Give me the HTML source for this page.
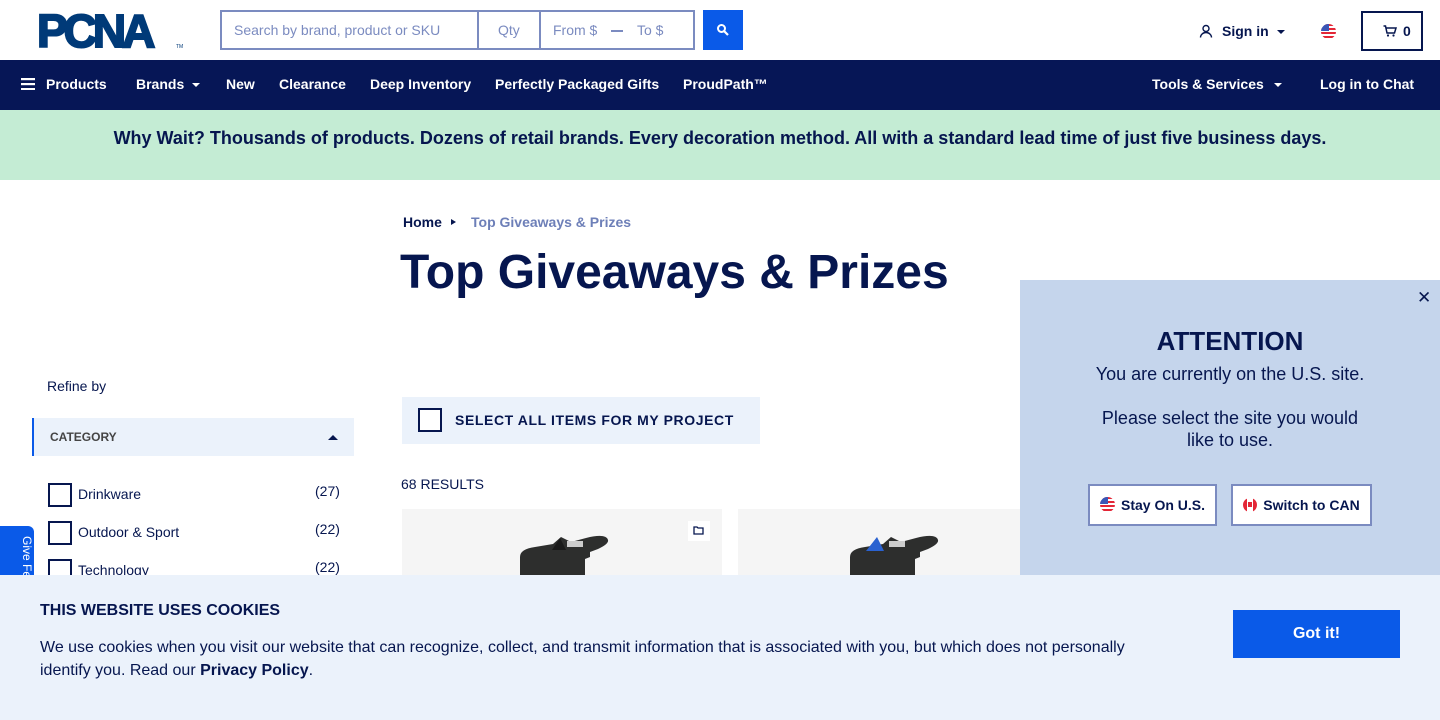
<!DOCTYPE html>
<html><head><meta charset="utf-8"><style>
*{box-sizing:border-box;margin:0;padding:0}
body{width:1440px;height:720px;overflow:hidden;position:relative;font-family:"Liberation Sans",sans-serif;background:#fff;color:#06164f}
.abs{position:absolute}
.nav{top:60px;left:0;width:1440px;height:50px;background:#061656;color:#fff;font-weight:bold;font-size:14px}
.nav span{position:absolute;top:16px}
.car{display:inline-block;width:0;height:0;border-left:4px solid transparent;border-right:4px solid transparent;border-top:4px solid currentColor;vertical-align:middle;margin-left:8px}
.flag{display:inline-block;width:15px;height:15px;border-radius:50%;background:repeating-linear-gradient(#e32636 0 2px,#fff 2px 4px);position:relative;overflow:hidden;vertical-align:middle}
.flag:before{content:"";position:absolute;left:0;top:0;width:8px;height:7px;background:#3a56b6}
.cb{position:absolute;width:24px;height:24px;border:2px solid #06164f;background:#fff}
</style></head><body>
<div class="abs" style="left:37px;top:8px;font:900 46px/46px 'Liberation Sans',sans-serif;color:#003a78;letter-spacing:-4px;-webkit-text-stroke:2px #003a78;transform:scaleX(1.0);transform-origin:left">PCNA</div>
<div class="abs" style="left:176px;top:44px;font-size:5px;color:#003a78">TM</div>
<div class="abs" style="left:220px;top:10px;width:475px;height:40px;border:2px solid #7b8bc0"></div>
<div class="abs" style="left:477px;top:10px;width:2px;height:40px;background:#7b8bc0"></div>
<div class="abs" style="left:539px;top:10px;width:2px;height:40px;background:#7b8bc0"></div>
<div class="abs" style="left:234px;top:22px;font-size:14px;color:#7b8bc0">Search by brand, product or SKU</div>
<div class="abs" style="left:498px;top:22px;font-size:14px;color:#7b8bc0">Qty</div>
<div class="abs" style="left:553px;top:22px;font-size:14px;color:#7b8bc0">From $</div>
<div class="abs" style="left:611px;top:30px;width:12px;height:2px;background:#7b8bc0"></div>
<div class="abs" style="left:637px;top:22px;font-size:14px;color:#7b8bc0">To $</div>
<div class="abs" style="left:703px;top:10px;width:40px;height:40px;background:#0a5ae8"><svg width="40" height="40"><circle cx="18.5" cy="18.5" r="3.5" stroke="#fff" stroke-width="2" fill="none"/><line x1="21" y1="21" x2="25" y2="25" stroke="#fff" stroke-width="2.2"/></svg></div>
<svg class="abs" style="left:1199px;top:24px" width="14" height="14"><circle cx="7" cy="4.5" r="3" stroke="#06164f" stroke-width="1.4" fill="none"/><path d="M1.5 13.5a5.5 5 0 0 1 11 0" stroke="#06164f" stroke-width="1.4" fill="none"/></svg>
<div class="abs" style="left:1222px;top:23px;font-size:14px;font-weight:bold">Sign in<span class="car" style="margin-left:8px"></span></div>
<div class="abs" style="left:1321px;top:23px"><span class="flag"></span></div>
<div class="abs" style="left:1361px;top:11px;width:62px;height:40px;border:2px solid #06164f;font-weight:bold;font-size:14px;padding:10px 0 0 20px"><svg width="14" height="12" style="vertical-align:-1px;margin-right:6px"><path d="M0.5 1h2l1.5 7h7.5l1.5-5H3.3" stroke="#06164f" stroke-width="1.5" fill="none"/><circle cx="5" cy="10.5" r="1.1" fill="#06164f"/><circle cx="10.5" cy="10.5" r="1.1" fill="#06164f"/></svg>0</div>
<div class="abs nav">
<svg class="abs" style="left:21px;top:18px" width="14" height="12"><rect y="0" width="14" height="2.2" fill="#fff"/><rect y="5" width="14" height="2.2" fill="#fff"/><rect y="10" width="14" height="2.2" fill="#fff"/></svg>
<span style="left:46px">Products</span><span style="left:136px">Brands<i class="car"></i></span><span style="left:226px">New</span><span style="left:279px">Clearance</span><span style="left:370px">Deep Inventory</span><span style="left:495px">Perfectly Packaged Gifts</span><span style="left:683px">ProudPath™</span><span style="left:1152px">Tools &amp; Services<i class="car" style="margin-left:10px"></i></span><span style="left:1320px">Log in to Chat</span>
</div>
<div class="abs" style="top:110px;left:0;width:1440px;height:70px;background:#c4ecd4;text-align:center;font-weight:bold;font-size:18px;padding-top:18px">Why Wait? Thousands of products. Dozens of retail brands. Every decoration method. All with a standard lead time of just five business days.</div>
<div class="abs" style="left:403px;top:214px;font-size:14px;font-weight:bold">Home</div>
<div class="abs" style="left:451px;top:219px;border-top:3.5px solid transparent;border-bottom:3.5px solid transparent;border-left:5px solid #06164f"></div>
<div class="abs" style="left:471px;top:214px;font-size:14px;font-weight:bold;color:#6d7fb8">Top Giveaways &amp; Prizes</div>
<div class="abs" style="left:400px;top:245px;font-size:48px;font-weight:bold">Top Giveaways &amp; Prizes</div>
<div class="abs" style="left:47px;top:378px;font-size:14px">Refine by</div>
<div class="abs" style="left:32px;top:418px;width:322px;height:38px;background:#ebf2fb;border-left:2px solid #0a5ae8;font-size:12px;font-weight:bold;color:#444;padding:12px 0 0 16px">CATEGORY</div>
<div class="abs" style="left:328px;top:435px;border-left:5px solid transparent;border-right:5px solid transparent;border-bottom:5px solid #06164f"></div>
<div class="cb" style="left:48px;top:483px"></div><div class="abs" style="left:78px;top:486px;font-size:14px">Drinkware</div><div class="abs" style="left:315px;top:483px;font-size:14px">(27)</div>
<div class="cb" style="left:48px;top:521px"></div><div class="abs" style="left:78px;top:524px;font-size:14px">Outdoor &amp; Sport</div><div class="abs" style="left:315px;top:521px;font-size:14px">(22)</div>
<div class="cb" style="left:48px;top:559px"></div><div class="abs" style="left:78px;top:562px;font-size:14px">Technology</div><div class="abs" style="left:315px;top:559px;font-size:14px">(22)</div>
<div class="abs" style="left:0;top:526px;width:34px;height:60px;background:#0a5ae8;border-radius:0 6px 0 0;color:#fff;font-size:12px;writing-mode:vertical-rl;white-space:nowrap;padding:10px 0 0 10px">Give Feedback</div>
<div class="abs" style="left:402px;top:397px;width:358px;height:47px;background:#ebf2fb"></div>
<div class="cb" style="left:418px;top:408px"></div>
<div class="abs" style="left:455px;top:412px;font-size:14px;font-weight:bold;letter-spacing:.6px">SELECT ALL ITEMS FOR MY PROJECT</div>
<div class="abs" style="left:401px;top:476px;font-size:14px">68 RESULTS</div>
<div class="abs" style="left:402px;top:509px;width:320px;height:70px;background:#f5f5f5"></div>
<div class="abs" style="left:738px;top:509px;width:290px;height:70px;background:#f5f5f5"></div>
<div class="abs" style="left:688px;top:521px;width:22px;height:20px;background:#fff"><svg width="22" height="20"><path d="M6 6h3l1 1h5v6H6z" stroke="#06164f" stroke-width="1.3" fill="none"/></svg></div>
<svg class="abs" style="left:515px;top:535px" width="95" height="45"><path d="M5 45V22q0-8 15-10l18-3 8-7 10 5 15-4q20-5 22 2 1 4-10 9l-8 3v5l-5 2v21z" fill="#2d2e2d"/><path d="M45 3l-8 12h14z" fill="#1a1a1a"/><path d="M52 6h16v6H52z" fill="#ccc"/></svg>
<svg class="abs" style="left:847px;top:535px" width="100" height="45"><path d="M3 45V22q0-8 15-10l18-3 8-7 10 5 15-4q20-5 22 2 1 4-10 9l-8 3v5l-5 2v21z" fill="#2d2e2d"/><path d="M30 2l-11 14h18z" fill="#2a62d0"/><path d="M42 6h16v6H42z" fill="#ccc"/></svg>
<div class="abs" style="left:1020px;top:280px;width:420px;height:300px;background:#c5d5ec;text-align:center">
<div class="abs" style="left:397px;top:8px;font-size:17px">✕</div>
<div style="margin-top:46px;font-size:26px;font-weight:bold">ATTENTION</div>
<div style="font-size:18px;margin-top:6px;line-height:22px">You are currently on the U.S. site.<br><br>Please select the site you would<br>like to use.</div>
<div class="abs" style="left:68px;top:204px;width:129px;height:42px;background:#fff;border:2px solid #7b8bc0;font-size:14px;font-weight:bold;padding-top:11px"><span class="flag" style="margin-right:6px;vertical-align:-2px"></span>Stay On U.S.</div>
<div class="abs" style="left:211px;top:204px;width:141px;height:42px;background:#fff;border:2px solid #7b8bc0;font-size:14px;font-weight:bold;padding-top:11px"><span style="display:inline-block;width:14px;height:14px;border-radius:50%;background:linear-gradient(90deg,#e32636 0 4px,#fff 4px 10px,#e32636 10px);margin-right:6px;vertical-align:-2px;position:relative"><span style="position:absolute;left:5px;top:4px;width:4px;height:5px;background:#e32636"></span></span>Switch to CAN</div>
</div>
<div class="abs" style="left:0;top:575px;width:1440px;height:145px;background:#ebf2fb">
<div class="abs" style="left:40px;top:27px;font-size:16px;font-weight:bold">THIS WEBSITE USES COOKIES</div>
<div class="abs" style="left:40px;top:61px;width:1100px;font-size:16px;line-height:23px">We use cookies when you visit our website that can recognize, collect, and transmit information that is associated with you, but which does not personally identify you. Read our <b>Privacy Policy</b>.</div>
<div class="abs" style="left:1233px;top:35px;width:167px;height:48px;background:#0a5ae8;color:#fff;font-weight:bold;font-size:16px;text-align:center;padding-top:15px">Got it!</div>
</div>
</body></html>
